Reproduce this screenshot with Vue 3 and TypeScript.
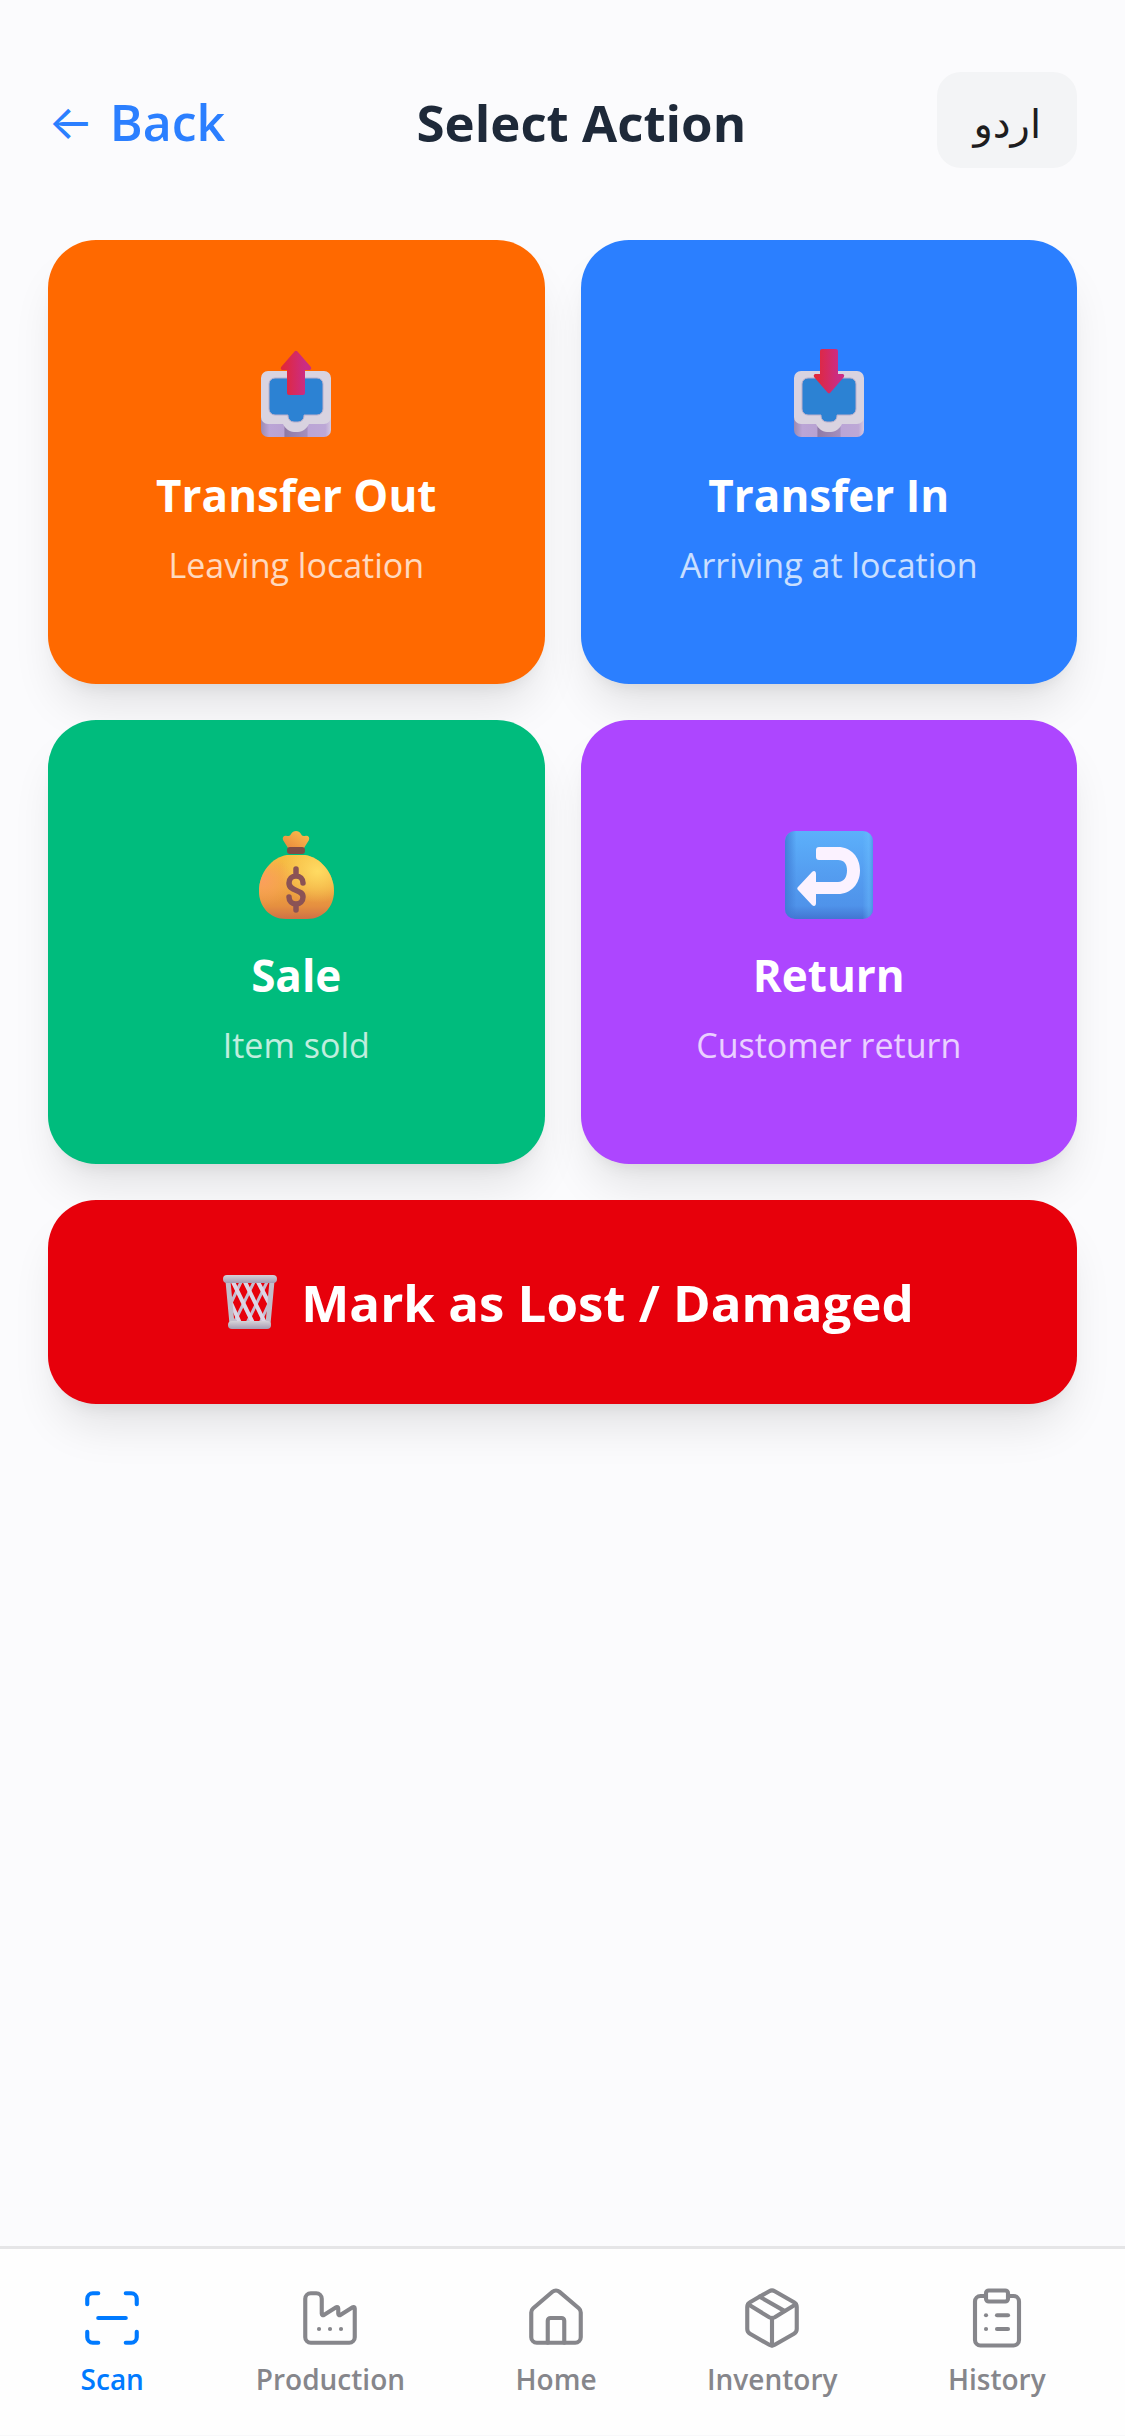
<script setup lang="ts">
interface Action {
  id: string
  title: string
  hint: string
}

interface Tab {
  id: string
  label: string
  paths: string[]
}

const actions: Action[] = [
  { id: 'out', title: 'Transfer Out', hint: 'Leaving location' },
  { id: 'in', title: 'Transfer In', hint: 'Arriving at location' },
  { id: 'sale', title: 'Sale', hint: 'Item sold' },
  { id: 'return', title: 'Return', hint: 'Customer return' },
]

const tabs: Tab[] = [
  {
    id: 'scan',
    label: 'Scan',
    paths: [
      'M3 7V5a2 2 0 0 1 2-2h2',
      'M17 3h2a2 2 0 0 1 2 2v2',
      'M21 17v2a2 2 0 0 1-2 2h-2',
      'M7 21H5a2 2 0 0 1-2-2v-2',
      'M7 12h10',
    ],
  },
  {
    id: 'production',
    label: 'Production',
    paths: [
      'M8 16h.01',
      'M12 16h.01',
      'M16 16h.01',
      'M3 19a2 2 0 0 0 2 2h14a2 2 0 0 0 2-2V8.5a.5.5 0 0 0-.769-.422l-4.462 2.844A.5.5 0 0 1 15 10.5v-2a.5.5 0 0 0-.769-.422L9.77 10.922A.5.5 0 0 1 9 10.5V5a2 2 0 0 0-2-2H5a2 2 0 0 0-2 2z',
    ],
  },
  {
    id: 'home',
    label: 'Home',
    paths: [
      'M15 21v-8a1 1 0 0 0-1-1h-4a1 1 0 0 0-1 1v8',
      'M3 10a2 2 0 0 1 .709-1.528l7-5.999a2 2 0 0 1 2.582 0l7 5.999A2 2 0 0 1 21 10v9a2 2 0 0 1-2 2H5a2 2 0 0 1-2-2z',
    ],
  },
  {
    id: 'inventory',
    label: 'Inventory',
    paths: [
      'M11 21.73a2 2 0 0 0 2 0l7-4A2 2 0 0 0 21 16V8a2 2 0 0 0-1-1.73l-7-4a2 2 0 0 0-2 0l-7 4A2 2 0 0 0 3 8v8a2 2 0 0 0 1 1.73z',
      'M12 22V12',
      'm3.3 7 7.703 4.734a2 2 0 0 0 1.994 0L20.7 7',
      'm7.5 4.27 9 5.15',
    ],
  },
  {
    id: 'history',
    label: 'History',
    paths: [
      'M9 2h6a1 1 0 0 1 1 1v2a1 1 0 0 1-1 1H9a1 1 0 0 1-1-1V3a1 1 0 0 1 1-1z',
      'M16 4h2a2 2 0 0 1 2 2v14a2 2 0 0 1-2 2H6a2 2 0 0 1-2-2V6a2 2 0 0 1 2-2h2',
      'M12 11h4',
      'M12 16h4',
      'M8 11h.01',
      'M8 16h.01',
    ],
  },
]

const activeTab = 'scan'
</script>

<template>
  <div class="app">
    <header class="top">
      <button type="button" class="back"><span class="arrow">←</span> <span>Back</span></button>
      <h1 class="heading">Select Action</h1>
      <button type="button" class="lang" lang="ur">اردو</button>
    </header>

    <main class="actions">
      <button v-for="a in actions" :key="a.id" type="button" class="card" :class="a.id">
        <svg v-if="a.id === 'out' || a.id === 'in'" class="emoji" viewBox="0 0 90 90" aria-hidden="true">
          <defs>
            <linearGradient :id="'side-' + a.id" x1="0" x2="1" y1="0" y2="0">
              <stop offset="0" stop-color="#9c8bb0" />
              <stop offset=".12" stop-color="#bba5d6" />
              <stop offset=".33" stop-color="#b8a2d2" />
              <stop offset=".34" stop-color="#8f7aa6" />
              <stop offset=".66" stop-color="#a48fbd" />
              <stop offset=".67" stop-color="#bba5d6" />
              <stop offset=".92" stop-color="#bda8d6" />
              <stop offset="1" stop-color="#d4c8e0" />
            </linearGradient>
            <linearGradient :id="'arrow-' + a.id" x1="0" x2="1" y1="0" y2="0">
              <stop offset=".1" stop-color="#e0283c" />
              <stop offset=".8" stop-color="#cb2c84" />
            </linearGradient>
          </defs>
          <path d="M10 60h70v20a7 7 0 0 1-7 7H17a7 7 0 0 1-7-7z" :fill="`url(#side-${a.id})`" />
          <path d="M17 21h56a7 7 0 0 1 7 7v39a7 7 0 0 1-7 7H58c-2 4-6 8-11 8h-4c-5 0-9-4-11-8H17a7 7 0 0 1-7-7V28a7 7 0 0 1 7-7z" fill="#d9d3e0" />
          <path d="M24 28h42a6 6 0 0 1 6 6v25a6 6 0 0 1-6 6H53v1a6 6 0 0 1-6 6h-4a6 6 0 0 1-6-6v-1H24a6 6 0 0 1-6-6V34a6 6 0 0 1 6-6z" fill="#2c82d3" stroke="#b9aecb" stroke-width="1" />
          <path v-if="a.id === 'out'" d="M43.500 1.500a2 2 0 0 1 3 0l13 15c1.500 2 .5 3.500-1.500 3.500h-4v23a2 2 0 0 1-2 2H38a2 2 0 0 1-2-2V20h-4c-2 0-3-1.500-1.500-3.500z" :fill="`url(#arrow-${a.id})`" />
          <path v-else d="M43.500 42.500a2 2 0 0 0 3 0l13-15c1.500-2 .5-3.500-1.500-3.500h-4V1a2 2 0 0 0-2-2H38a2 2 0 0 0-2 2v23h-4c-2 0-3 1.500-1.500 3.500z" :fill="`url(#arrow-${a.id})`" />
        </svg>

        <svg v-else-if="a.id === 'sale'" class="emoji" viewBox="0 0 90 90" aria-hidden="true">
          <defs>
            <linearGradient id="bag" x1=".5" x2=".5" y1="0" y2="1">
              <stop offset="0" stop-color="#f6bd42" />
              <stop offset=".5" stop-color="#f0a83f" />
              <stop offset=".8" stop-color="#e58f40" />
              <stop offset="1" stop-color="#cf7146" />
            </linearGradient>
            <radialGradient id="shine" cx=".78" cy=".25" r=".5">
              <stop offset="0" stop-color="#ffdb62" />
              <stop offset="1" stop-color="#ffdb62" stop-opacity="0" />
            </radialGradient>
            <radialGradient id="blush" cx=".05" cy=".4" r=".4">
              <stop offset="0" stop-color="#fb9f5c" />
              <stop offset="1" stop-color="#fb9f5c" stop-opacity="0" />
            </radialGradient>
            <linearGradient id="neck" x1="0" x2="1" y1="1" y2="0">
              <stop offset="0" stop-color="#e8863c" />
              <stop offset="1" stop-color="#fdc24e" />
            </linearGradient>
          </defs>
          <g v-for="layer in ['bag', 'shine', 'blush']" :key="layer">
            <path d="M36 25h18c15 2 29 18 29 36 0 15-10 28-27 28H35C18 89 8 76 8 61c0-18 13-34 28-36z" :fill="`url(#${layer})`" />
          </g>
          <path d="M37 18 32 10c-1-3 1-5 4-4 2 0 3 0 4-2 2-4 8-4 10 0 1 2 2 2 4 2 3-1 5 1 4 4l-5 8z" fill="url(#neck)" />
          <rect x="36" y="17" width="18" height="7" rx="3" fill="#7f4c45" />
          <path d="M45 39v6M45 75v5M52 53c0-4-3-7-7-7s-7 3-7 7c0 9 14 6 14 14 0 4-3 7-7 7s-7-3-7-7" fill="none" stroke="#8b5355" stroke-width="5.500" stroke-linecap="round" />
        </svg>

        <svg v-else class="emoji" viewBox="0 0 90 90" aria-hidden="true">
          <defs>
            <linearGradient id="tile" x1="0" x2="0" y1="0" y2="1">
              <stop offset="0" stop-color="#5cb0fb" />
              <stop offset=".5" stop-color="#549df0" />
              <stop offset=".85" stop-color="#4f93ea" />
              <stop offset="1" stop-color="#4275d2" />
            </linearGradient>
            <linearGradient id="edge" x1="0" x2="1" y1="0" y2="0">
              <stop offset="0" stop-color="#3f7bd4" stop-opacity=".9" />
              <stop offset=".13" stop-color="#3f7bd4" stop-opacity="0" />
              <stop offset=".88" stop-color="#6cc0ff" stop-opacity="0" />
              <stop offset=".95" stop-color="#6cc0ff" stop-opacity=".4" />
              <stop offset="1" stop-color="#4a90e0" stop-opacity=".7" />
            </linearGradient>
          </defs>
          <rect x="1" y="1" width="88" height="88" rx="10" fill="url(#tile)" />
          <rect x="1" y="1" width="88" height="88" rx="10" fill="url(#edge)" />
          <path d="M35 17h19c13 0 22 10 22 23.500S67 64 54 64H32v9c0 3-2 4-4 2L14 60c-1-1-1-2 0-3l14-15c2-2 4-1 4 2v8h22c6 0 9-5 9-11.500S60 30 54 30H35c-2 0-3-1-3-3v-7c0-2 1-3 3-3z" fill="#fbf2ff" />
        </svg>

        <span class="title">{{ a.title }}</span>
        <span class="hint">{{ a.hint }}</span>
      </button>

      <button type="button" class="lost">
        <svg class="bin" viewBox="0 0 54 54" aria-hidden="true">
          <defs>
            <linearGradient id="rim" x1="0" x2="0" y1="0" y2="1">
              <stop offset="0" stop-color="#d6d2d8" />
              <stop offset="1" stop-color="#a69cb2" />
            </linearGradient>
          </defs>
          <g fill="none" stroke="#c4bccf" stroke-width="3">
            <path d="M18 7 8 28M31 7 11 48M44 7 24 48M47 26 37 48" />
          </g>
          <g fill="none" stroke="#dcd6e6" stroke-width="4">
            <path d="M35 7 46 28M22 7 42 48M10 7 30 48M8 28 17 48" />
          </g>
          <path d="M5 6 9 49M49 6 45 49" fill="none" stroke="#c3bdc9" stroke-width="5" />
          <rect x="0" y="0" width="54" height="8" rx="4" fill="url(#rim)" />
          <rect x="5" y="46" width="43" height="8" rx="4" fill="url(#rim)" />
        </svg>
        <span>Mark as Lost / Damaged</span>
      </button>
    </main>

    <nav class="tabs">
      <a v-for="t in tabs" :key="t.id" href="#" class="tab" :class="{ active: t.id === activeTab }">
        <svg class="glyph" viewBox="0 0 24 24" aria-hidden="true">
          <path v-for="p in t.paths" :key="p" :d="p" />
        </svg>
        <span>{{ t.label }}</span>
      </a>
    </nav>
  </div>
</template>

<style>
body {
  margin: 0;
  background: #fbfbfd;
}
</style>

<style scoped>
.app {
  display: flex;
  flex-direction: column;
  min-height: 100vh;
  box-sizing: border-box;
  background: #fbfbfd;
  color: #1d1d1f;
  font-family: 'Open Sans', 'Noto Sans', sans-serif;
}

button {
  margin: 0;
  border: 0;
  font-family: inherit;
  cursor: pointer;
}

.top {
  display: flex;
  align-items: center;
  justify-content: space-between;
  padding: 72px 48px;
}

.back {
  display: flex;
  align-items: center;
  gap: 16px;
  padding: 4px 0 0;
  background: none;
  color: #2b7fff;
  font-size: 50px;
  font-weight: 600;
  line-height: 84px;
}

.arrow {
  font-family: Inter, sans-serif;
  font-size: 48px;
  font-weight: 400;
}

.heading {
  margin: 0;
  padding-top: 4px;
  color: #1e2939;
  font-size: 51px;
  font-weight: 700;
  line-height: 84px;
}

.lang {
  padding: 22px 36px 14px;
  border-radius: 24px;
  background: #f3f4f6;
  color: #1d1d1f;
  font-family: 'DejaVu Sans', sans-serif;
  font-size: 40px;
  line-height: 60px;
}

.actions {
  display: grid;
  grid-template-columns: 1fr 1fr;
  gap: 36px;
  padding: 0 48px;
}

.card,
.lost {
  display: flex;
  align-items: center;
  justify-content: center;
  border-radius: 48px;
  color: #fff;
  box-shadow: 0 30px 45px -9px rgba(0, 0, 0, 0.1), 0 12px 18px -12px rgba(0, 0, 0, 0.1);
}

.card {
  flex-direction: column;
  padding: 110px 24px 92px;
}

.out {
  background: #ff6900;
}

.in {
  background: #2b7fff;
}

.sale {
  background: #00bc7d;
}

.return {
  background: #ad46ff;
}

.emoji {
  width: 90px;
  height: 90px;
  margin-bottom: 22px;
  overflow: visible;
}

.title {
  font-size: 44px;
  font-weight: 700;
  line-height: 66px;
}

.hint {
  margin-top: 10px;
  font-size: 34px;
  line-height: 54px;
  opacity: 0.75;
}

.lost {
  grid-column: 1 / -1;
  gap: 24px;
  padding: 60px 24px;
  background: #e7000b;
  font-size: 51px;
  font-weight: 700;
  line-height: 84px;
}

.bin {
  width: 54px;
  height: 54px;
  margin-left: 12px;
}

.tabs {
  display: flex;
  justify-content: space-around;
  margin-top: auto;
  padding: 36px 24px;
  border-top: 3px solid #e5e5e7;
  border-bottom: 1px solid #f8f8fa;
  background: #fefefe;
}

.tab {
  display: flex;
  flex-direction: column;
  align-items: center;
  gap: 8px;
  color: #86868b;
  font-size: 28px;
  font-weight: 600;
  line-height: 40px;
  text-decoration: none;
}

.tab.active {
  color: #007aff;
}

.glyph {
  width: 66px;
  height: 66px;
  fill: none;
  stroke: currentColor;
  stroke-width: 1.5;
  stroke-linecap: round;
  stroke-linejoin: round;
}
</style>
